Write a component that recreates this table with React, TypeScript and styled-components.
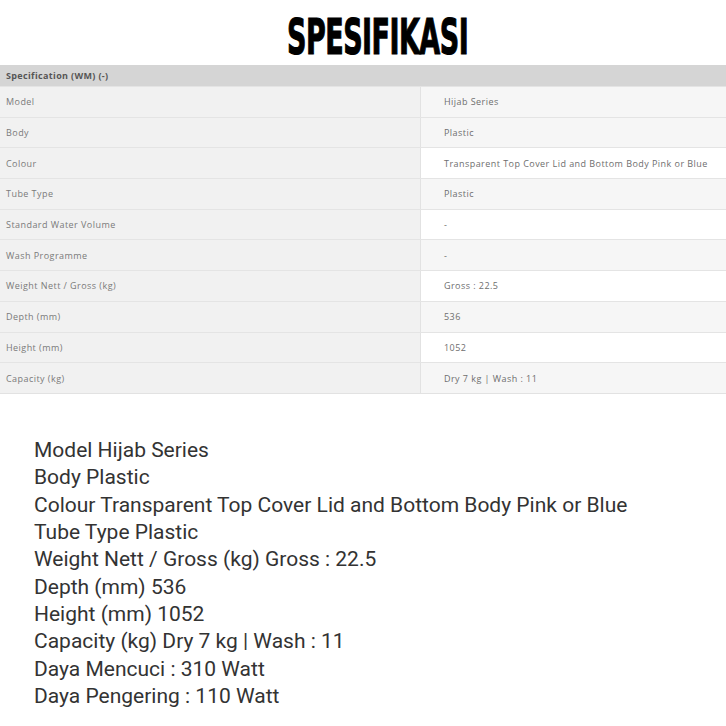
import styled, { createGlobalStyle } from "styled-components";

const GlobalStyle = createGlobalStyle`
  html, body {
    margin: 0;
    padding: 0;
    background: #ffffff;
  }
  body {
    font-family: "Open Sans", "Liberation Sans", sans-serif;
  }
`;

const rows: { label: string; value: string; white: boolean }[] = [
  { label: "Model", value: "Hijab Series", white: false },
  { label: "Body", value: "Plastic", white: false },
  { label: "Colour", value: "Transparent Top Cover Lid and Bottom Body Pink or Blue", white: true },
  { label: "Tube Type", value: "Plastic", white: false },
  { label: "Standard Water Volume", value: "-", white: true },
  { label: "Wash Programme", value: "-", white: false },
  { label: "Weight Nett / Gross (kg)", value: "Gross : 22.5", white: true },
  { label: "Depth (mm)", value: "536", white: false },
  { label: "Height (mm)", value: "1052", white: true },
  { label: "Capacity (kg)", value: "Dry 7 kg | Wash : 11", white: false },
];

const lines = [
  "Model Hijab Series",
  "Body Plastic",
  "Colour Transparent Top Cover Lid and Bottom Body Pink or Blue",
  "Tube Type Plastic",
  "Weight Nett / Gross (kg) Gross : 22.5",
  "Depth (mm) 536",
  "Height (mm) 1052",
  "Capacity (kg) Dry 7 kg | Wash : 11",
  "Daya Mencuci : 310 Watt",
  "Daya Pengering : 110 Watt",
];

const Page = styled.div`
  width: 726px;
  height: 726px;
  overflow: hidden;
  display: flex;
  flex-direction: column;
`;

const TitleWrap = styled.div`
  height: 65px;
  display: flex;
  justify-content: center;
  align-items: flex-end;
  padding: 0 0 3px 30px;
  box-sizing: border-box;
`;

const Title = styled.h1`
  margin: 0;
  font-family: "DejaVu Sans", "Liberation Sans", sans-serif;
  font-weight: 900;
  font-size: 50px;
  line-height: 1;
  color: #000;
  letter-spacing: -1px;
  transform: scaleX(0.54);
  -webkit-text-stroke: 1.2px #000;
`;

const Table = styled.div`
  display: flex;
  flex-direction: column;
  border-bottom: 1px solid #e2e2e2;
`;

const HeadBar = styled.div`
  height: 21px;
  background: #d5d5d5;
  display: flex;
  align-items: center;
  padding-left: 6px;
  font-size: 9px;
  font-weight: 700;
  color: #555;
  letter-spacing: 0.35px;
`;

const Row = styled.div`
  display: grid;
  grid-template-columns: 421px 1fr;
  height: 30.7px;
  border-top: 1px solid #e4e4e4;
  box-sizing: border-box;
`;

const Label = styled.div`
  background: #f1f1f1;
  border-right: 1px solid #e2e2e2;
  display: flex;
  align-items: center;
  padding-left: 6px;
  font-size: 9px;
  color: #7a7a7a;
  letter-spacing: 0.45px;
`;

const Value = styled.div<{ $white: boolean }>`
  background: ${(p) => (p.$white ? "#ffffff" : "#f6f6f6")};
  display: flex;
  align-items: center;
  padding-left: 23px;
  font-size: 9px;
  color: #6e6e6e;
  letter-spacing: 0.45px;
  white-space: nowrap;
`;

const List = styled.div`
  padding: 43px 0 0 34px;
  display: flex;
  flex-direction: column;
`;

const Line = styled.div`
  font-family: Roboto, "Liberation Sans", sans-serif;
  font-size: 21px;
  line-height: 27.33px;
  color: #333;
  white-space: nowrap;
`;

export default function App() {
  return (
    <Page>
      <GlobalStyle />
      <TitleWrap>
        <Title>SPESIFIKASI</Title>
      </TitleWrap>
      <Table>
        <HeadBar>Specification (WM) (-)</HeadBar>
        {rows.map((r) => (
          <Row key={r.label}>
            <Label>{r.label}</Label>
            <Value $white={r.white}>{r.value}</Value>
          </Row>
        ))}
      </Table>
      <List>
        {lines.map((l) => (
          <Line key={l}>{l}</Line>
        ))}
      </List>
    </Page>
  );
}
